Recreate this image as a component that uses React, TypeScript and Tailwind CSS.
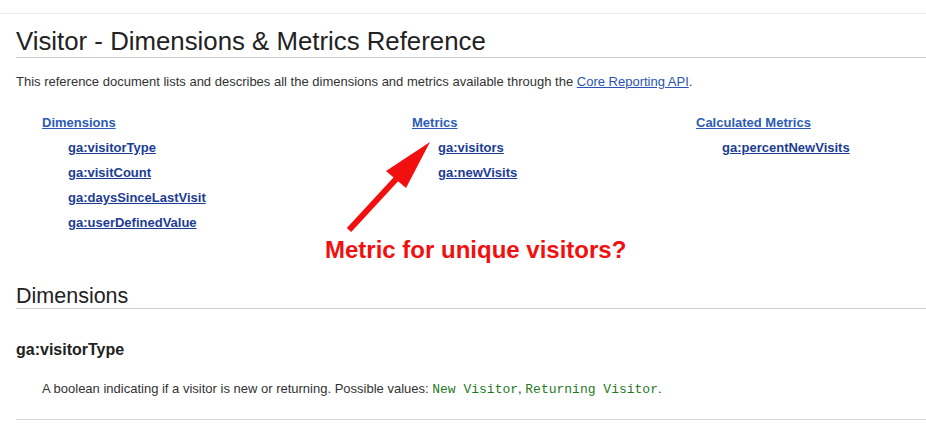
const columns = [
  {
    title: "Dimensions",
    width: "w-[370px]",
    items: ["ga:visitorType", "ga:visitCount", "ga:daysSinceLastVisit", "ga:userDefinedValue"],
  },
  { title: "Metrics", width: "w-[284px]", items: ["ga:visitors", "ga:newVisits"] },
  { title: "Calculated Metrics", width: "flex-1", items: ["ga:percentNewVisits"] },
];

export default function App() {
  return (
    <div className="relative w-[926px] h-[430px] overflow-hidden bg-white font-['Liberation_Sans',Arial,sans-serif] text-[#222]">
      <div className="h-[14px] border-b border-[#ececec]" />

      <div className="pl-4">
        <h1 className="mt-[12px] text-[25.8px] leading-[30px] text-[#222] pb-[1px] border-b border-[#cfcfcf]">
          Visitor - Dimensions &amp; Metrics Reference
        </h1>

        <p className="mt-[16px] text-[13px] leading-[16px] text-[#333]">
          This reference document lists and describes all the dimensions and metrics available through the{" "}
          <a className="text-[#2a54b2] underline">Core Reporting API</a>.
        </p>

        <div className="mt-[25px] pl-[26px] flex">
          {columns.map((col) => (
            <div key={col.title} className={col.width}>
              <a className="block text-[13px] leading-[16px] font-bold text-[#2d5cb4] underline">{col.title}</a>
              <ul className="pl-[26px]">
                {col.items.map((item) => (
                  <li key={item} className="mt-[9px] text-[13px] leading-[16px] font-bold">
                    <a className="text-[#1c3c94] underline">{item}</a>
                  </li>
                ))}
              </ul>
            </div>
          ))}
        </div>

        <div className="mt-[5px] pl-[309px] text-[24px] leading-[28px] font-bold text-[#f20f0f]">
          Metric for unique visitors?
        </div>

        <h2 className="mt-[20px] text-[21.5px] leading-[24px] text-[#222] border-b border-[#cfcfcf]">
          Dimensions
        </h2>

        <h3 className="mt-[31px] text-[16px] leading-[20px] font-bold text-[#222]">ga:visitorType</h3>

        <p className="mt-[21px] pl-[26px] text-[13px] leading-[16px] text-[#333]">
          A boolean indicating if a visitor is new or returning. Possible values:{" "}
          <code className="font-['Liberation_Mono','Courier_New',monospace] text-[13px] text-[#1f7a1f]">New Visitor</code>,{" "}
          <code className="font-['Liberation_Mono','Courier_New',monospace] text-[13px] text-[#1f7a1f]">Returning Visitor</code>.
        </p>

        <div className="mt-[21px] border-b border-[#d6d6d6]" />
      </div>

      <svg className="absolute left-0 top-0 pointer-events-none" width="926" height="430">
        <line x1="349" y1="230" x2="398" y2="177" stroke="#f20f0f" strokeWidth="6" />
        <polygon points="430,142 386,171 406,188" fill="#f20f0f" />
      </svg>
    </div>
  );
}
